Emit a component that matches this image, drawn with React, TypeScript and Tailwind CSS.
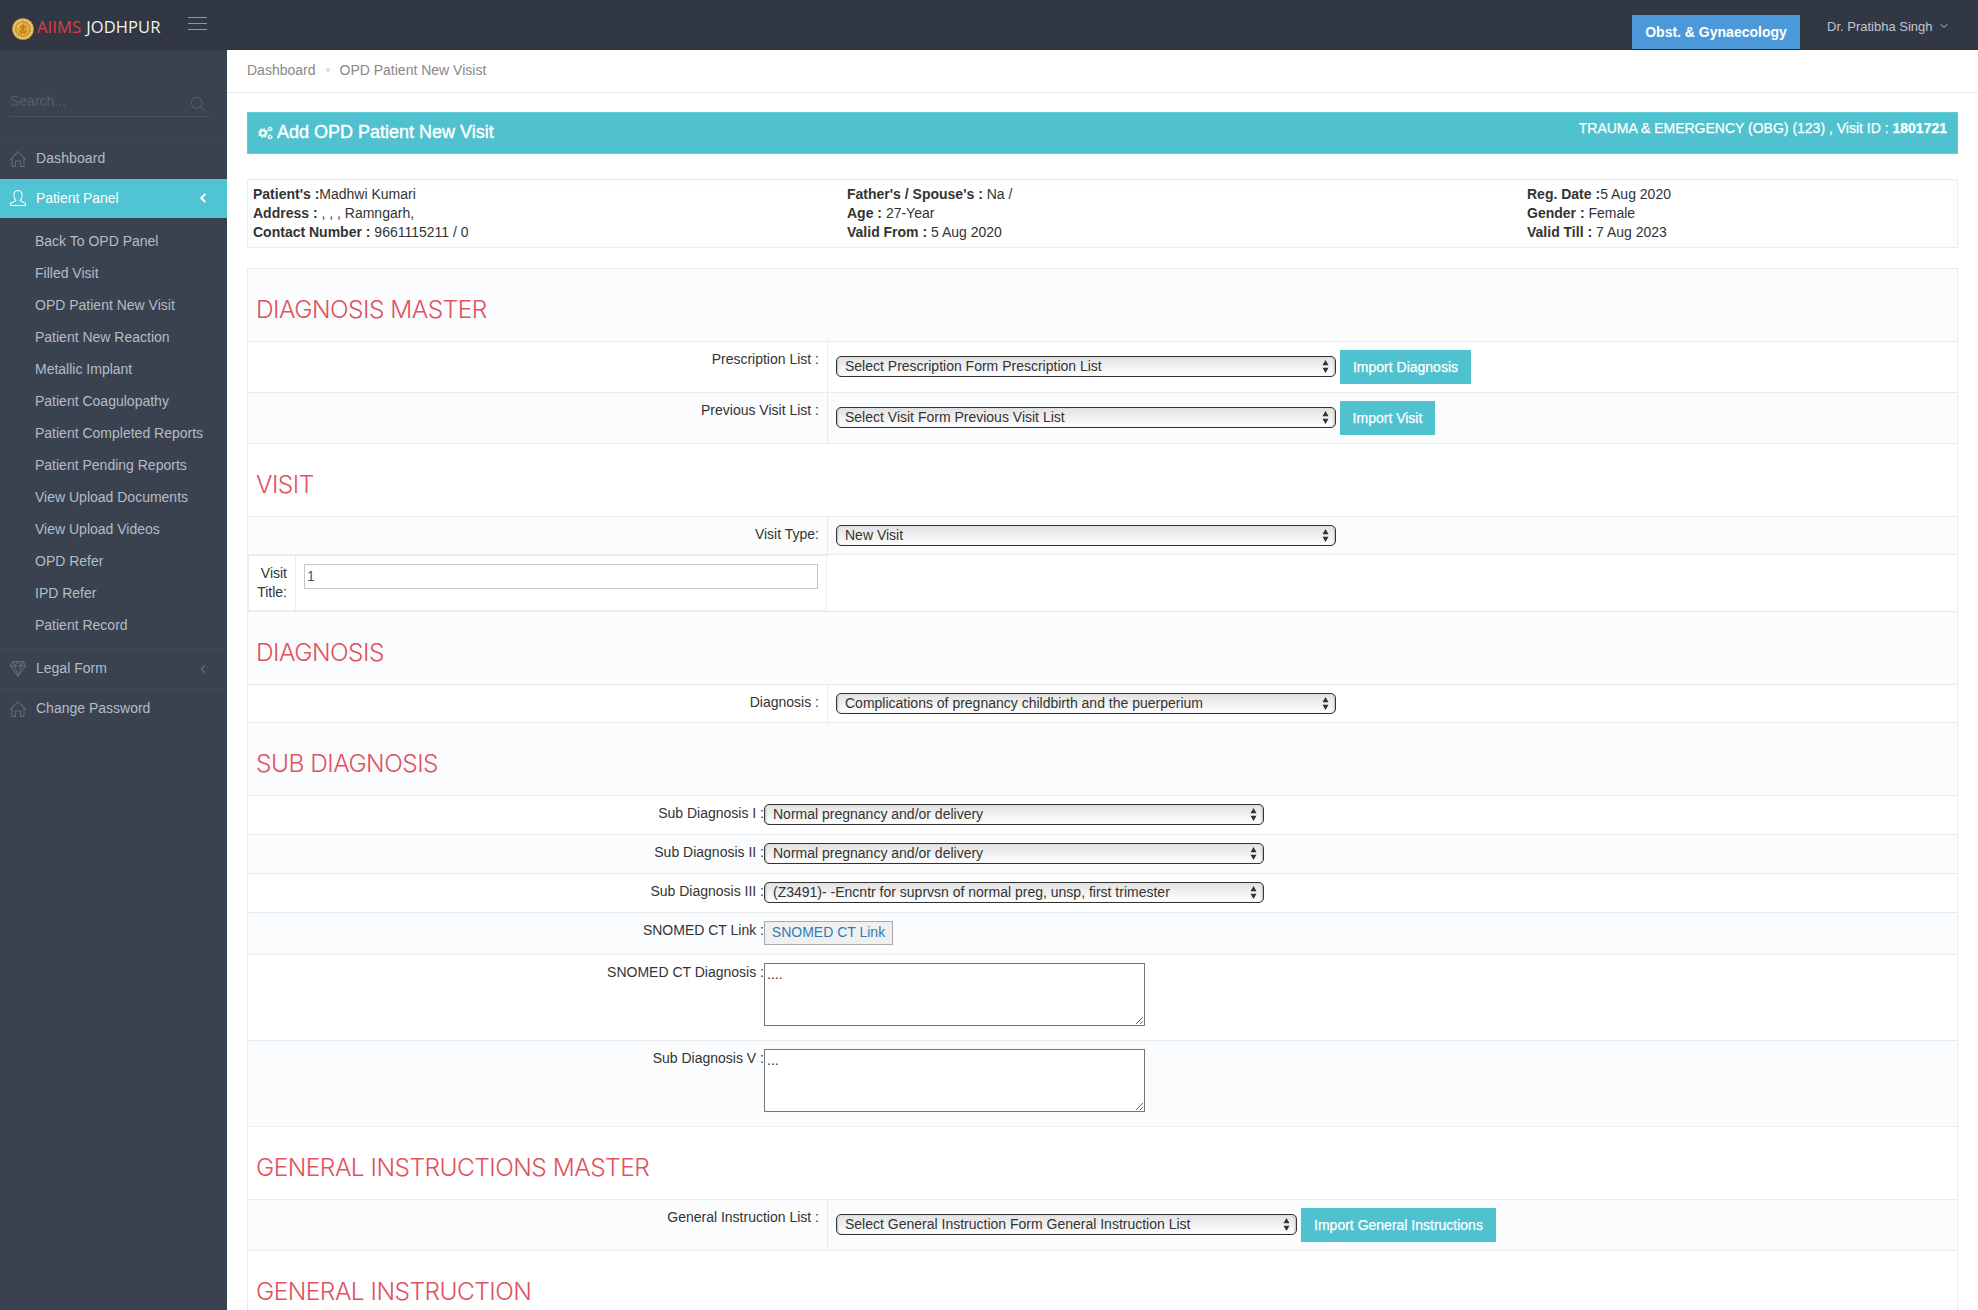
import React, { useState } from 'react';
import { SlHome, SlUser, SlDiamond, SlMagnifier } from 'react-icons/sl';
import { ChevronLeft, ChevronDown } from 'lucide-react';
import clsx from 'clsx';

const patientLinks = [
  'Back To OPD Panel',
  'Filled Visit',
  'OPD Patient New Visit',
  'Patient New Reaction',
  'Metallic Implant',
  'Patient Coagulopathy',
  'Patient Completed Reports',
  'Patient Pending Reports',
  'View Upload Documents',
  'View Upload Videos',
  'OPD Refer',
  'IPD Refer',
  'Patient Record'
];

const CogsIcon: React.FC<{ className?: string }> = ({ className }) => (
  <svg width="15" height="14" viewBox="0 0 15 14" fill="none" stroke="currentColor" className={className}>
    <circle cx="5" cy="7" r="2.8" strokeWidth="2" />
    <circle cx="5" cy="7" r="4.2" strokeWidth="1.4" strokeDasharray="1.65 1.65" />
    <circle cx="12" cy="3" r="1.5" strokeWidth="1.2" />
    <circle cx="12" cy="3" r="2.2" strokeWidth="0.8" strokeDasharray="1.15 1.15" />
    <circle cx="12" cy="11" r="1.5" strokeWidth="1.2" />
    <circle cx="12" cy="11" r="2.2" strokeWidth="0.8" strokeDasharray="1.15 1.15" />
  </svg>
);

const Header: React.FC = () => (
  <header className="flex h-[50px] shrink-0 bg-[#313843] border-b border-[#2b323d]">
    <div className="flex w-[227px] shrink-0">
      <svg width="22" height="22" viewBox="0 0 22 22" className="mt-[18px] ml-3 shrink-0">
        <circle cx="11" cy="11" r="10.8" fill="#dba544" />
        <circle cx="11" cy="11" r="9" fill="none" stroke="#f0dca6" strokeWidth="1.6" strokeDasharray="1.6 1.1" />
        <circle cx="11" cy="11" r="7.4" fill="#e6a930" stroke="#b98a3a" strokeWidth="0.8" />
        <path d="M9 16c.6-2 0-3-1.5-3.5M11 6v9M8 8c1 1 5 1 6 0M8.5 11h5M13 16c-.6-2 0-3 1.5-3.5" stroke="#a8752a" strokeWidth="1.1" fill="none" />
        <path d="M5.5 9c.8-2 2.3-3.2 4.2-3.4" stroke="#fbe596" strokeWidth="1" fill="none" />
      </svg>
      <div className="mt-[15px] ml-[3px] flex h-6 w-[126px] items-center font-['Open_Sans','Noto_Sans',sans-serif] text-[16.5px] leading-6 whitespace-nowrap">
        <span className="tracking-[0.15px] text-[#e23a42]">AIIMS</span>
        <span className="ml-[5px] tracking-[0.08px] text-[#f1f1f1]">JODHPUR</span>
      </div>
      <button className="mt-[17px] ml-[25px] flex h-[13px] w-[19px] flex-col justify-between">
        <span className="h-px w-full bg-[#8d99a8]" />
        <span className="h-px w-full bg-[#8d99a8]" />
        <span className="h-px w-full bg-[#8d99a8]" />
      </button>
    </div>
    <div className="flex flex-1 justify-end">
      <div className="mt-[15px] flex h-[34px] w-[168px] items-center justify-center bg-[#4b99d9] text-[14px] font-bold text-white">
        <span>Obst. &amp; Gynaecology</span>
      </div>
      <div className="ml-[27px] flex h-[52px] w-[151px] items-center text-[13px] text-[#c0c6d0]">
        <span className="w-[105px] whitespace-nowrap">Dr. Pratibha Singh</span>
        <ChevronDown size={12} className="ml-[6px]" />
      </div>
    </div>
  </header>
);

const Sidebar: React.FC = () => {
  const [search, setSearch] = useState('');

  return (
    <nav className="w-[227px] shrink-0 bg-[#39424e] text-[14px] text-[#b4bcc8]">
      <div className="h-[89px] px-[10px] pt-10">
        <div className="flex h-[27px] w-[199px] border-b border-[#47535f]">
          <input
            value={search}
            onChange={(e) => setSearch(e.target.value)}
            placeholder="Search..."
            className="h-[22px] w-[181px] bg-transparent text-[14px] outline-none placeholder:text-[#51606f]"
          />
          <SlMagnifier size={15} className="mt-[7px] text-[#51606f]" />
        </div>
      </div>

      <div className="flex h-10 items-center border-t border-[#3f4956] px-[10px] pb-[2px]">
        <SlHome size={16} className="text-[#606c7d]" />
        <span className="ml-[10px] tracking-[0.1px]">Dashboard</span>
      </div>
      <div className="flex h-[39px] items-center bg-[#50c4d2] px-[10px] pb-px text-white">
        <SlUser size={16} />
        <span className="ml-[10px] flex-1 tracking-[-0.05px]">Patient Panel</span>
        <ChevronLeft size={14} strokeWidth={3.5} className="mr-[7px]" />
      </div>

      <ul className="pt-[7px] pb-2">
        {patientLinks.map(link => (
          <li key={link} className="flex h-8 items-center pl-[35px] whitespace-nowrap">
            {link}
          </li>
        ))}
      </ul>

      <div className="flex h-10 items-center border-t border-[#3f4956] px-[10px] pb-[2px]">
        <SlDiamond size={16} className="text-[#606c7d]" />
        <span className="ml-[10px] flex-1">Legal Form</span>
        <ChevronLeft size={14} strokeWidth={2} className="mr-[7px] text-[#606c7d]" />
      </div>
      <div className="flex h-10 items-center border-t border-[#3f4956] px-[10px] pb-[2px]">
        <SlHome size={16} className="text-[#606c7d]" />
        <span className="ml-[10px]">Change Password</span>
      </div>
    </nav>
  );
};

interface RowProps {
  shaded?: boolean;
  className?: string;
  children: React.ReactNode;
}

const Row: React.FC<RowProps> = ({ shaded, className, children }) => (
  <div className={clsx('flex border-t border-[#e7ecf1]', shaded && 'bg-[#fbfcfd]', className)}>{children}</div>
);

const SectionTitle: React.FC<{ title: string; shaded?: boolean }> = ({ title, shaded }) => (
  <Row shaded={shaded} className="h-[73px]">
    <h3 className="pt-[26px] pl-2 font-['Inter','Liberation_Sans',sans-serif] text-[24.5px] leading-7 font-light tracking-[-0.53px] text-[#e0525f]">
      {title}
    </h3>
  </Row>
);

const Select: React.FC<{ value: string; className?: string }> = ({ value, className }) => (
  <div className={clsx('relative h-[21px]', className)}>
    <select className="block h-[21px] w-full appearance-none rounded-[5px] border border-[#333] bg-linear-to-b from-[#e2e2e2] to-white pr-5 pl-2 text-[14px] leading-[19px] text-[#333] shadow-[inset_2px_0_2px_-1px_#bbb,inset_-2px_0_2px_-1px_#bbb]">
      <option>{value}</option>
    </select>
    <svg width="7" height="13" viewBox="0 0 7 13" className="pointer-events-none absolute top-1 right-[7px]" fill="#333">
      <path d="M3.5 0 6.5 5.2h-6zM3.5 13l3-5.2h-6z" />
    </svg>
  </div>
);

const ImportButton: React.FC<{ label: string; className: string }> = ({ label, className }) => (
  <button
    className={clsx(
      'h-[34px] bg-[#50c1cf] text-[14px] whitespace-nowrap text-white [-webkit-text-stroke:0.25px_#fff]',
      className
    )}
  >
    {label}
  </button>
);

// label cell + divider, used by the rows with two bordered columns
const FieldRow: React.FC<RowProps & { label: string }> = ({ label, shaded, className, children }) => (
  <Row shaded={shaded} className={className}>
    <div className="w-[580px] border-r border-[#e7ecf1] pt-2 pr-2 text-right">{label}</div>
    <div className="flex gap-1 pt-2 pl-2">{children}</div>
  </Row>
);

const SubRow: React.FC<RowProps & { label: string }> = ({ label, shaded, className, children }) => (
  <Row shaded={shaded} className={className}>
    <div className="w-[516px] pt-2 text-right">{label}</div>
    <div className="pt-2">{children}</div>
  </Row>
);

const notesClass =
  'block h-[63px] w-[381px] resize border border-[#767676] bg-white px-[2px] pt-[2px] text-[14px] leading-[17px] text-[#333]';

const Info: React.FC<{ label: string; value: string }> = ({ label, value }) => (
  <div className="whitespace-pre">
    <b>{label}</b>
    {value}
  </div>
);

export default function App() {
  return (
    <div className="flex h-[1310px] w-[1978px] flex-col overflow-hidden bg-white font-['Liberation_Sans',Arial,sans-serif] text-[14px] leading-[19px] text-[#333]">
      <Header />
      <div className="flex min-h-0 flex-1">
        <Sidebar />
        <main className="min-w-0 flex-1 overflow-hidden">
          <div className="flex h-[43px] items-center border-b border-[#e7ecf1] pb-[2px] pl-5 text-[#888]">
            <span>Dashboard</span>
            <span className="mx-[10px] h-1 w-1 rounded-full bg-[#ddd]" />
            <span>OPD Patient New Visist</span>
          </div>

          <div className="mx-5 mt-[19px] flex h-[42px] w-[1711px] justify-between border border-[#5fcbd7] bg-[#50c1cf] px-[10px] text-white [-webkit-text-stroke:0.25px_#fff]">
            <div className="flex h-[38px] items-center text-[18px]">
              <CogsIcon className="mt-[2px]" />
              <span className="ml-1 [-webkit-text-stroke:0.4px_#fff]">Add OPD Patient New Visit</span>
            </div>
            <div className="pt-[6px] whitespace-nowrap">
              TRAUMA &amp; EMERGENCY (OBG) (123) , Visit ID : <b>1801721</b>
            </div>
          </div>

          <div className="mx-5 mt-[25px] h-[69px] w-[1711px] border border-[#e7ecf1] bg-[#fbfcfd] p-[5px]">
            <div className="flex h-[57px] bg-white">
              <div className="w-[594px]">
                <Info label="Patient's :" value="Madhwi Kumari" />
                <Info label="Address :" value=" , , , Ramngarh," />
                <Info label="Contact Number :" value=" 9661115211 / 0" />
              </div>
              <div className="w-[680px]">
                <Info label="Father's / Spouse's :" value=" Na /" />
                <Info label="Age :" value=" 27-Year" />
                <Info label="Valid From :" value=" 5 Aug 2020" />
              </div>
              <div>
                <Info label="Reg. Date :" value="5 Aug 2020" />
                <Info label="Gender :" value=" Female" />
                <Info label="Valid Till :" value=" 7 Aug 2023" />
              </div>
            </div>
          </div>

          <div className="mx-5 mt-5 w-[1711px] border-x border-[#e7ecf1]">
            <SectionTitle title="DIAGNOSIS MASTER" shaded />
            <FieldRow label="Prescription List :" className="h-[51px]">
              <Select value="Select Prescription Form Prescription List" className="mt-[6px] w-[500px]" />
              <ImportButton label="Import Diagnosis" className="w-[131px]" />
            </FieldRow>
            <FieldRow label="Previous Visit List :" shaded className="h-[51px]">
              <Select value="Select Visit Form Previous Visit List" className="mt-[6px] w-[500px]" />
              <ImportButton label="Import Visit" className="w-[95px]" />
            </FieldRow>

            <SectionTitle title="VISIT" />
            <FieldRow label="Visit Type:" shaded className="h-[38px]">
              <Select value="New Visit" className="w-[500px]" />
            </FieldRow>
            <Row className="h-[57px]">
              <div className="flex h-14 w-[579px] border border-[#e7ecf1]">
                <div className="w-[47px] border-r border-[#e7ecf1] pt-2 pr-2 text-right">Visit Title:</div>
                <div className="flex-1 px-2 pt-2">
                  <input
                    defaultValue="1"
                    className="block h-[25px] w-full border border-[#c5c5c5] bg-white px-[2px] pb-px text-[14px] text-[#555]"
                  />
                </div>
              </div>
            </Row>

            <SectionTitle title="DIAGNOSIS" shaded />
            <FieldRow label="Diagnosis :" className="h-[38px]">
              <Select value="Complications of pregnancy childbirth and the puerperium" className="w-[500px]" />
            </FieldRow>

            <SectionTitle title="SUB DIAGNOSIS" shaded />
            <SubRow label="Sub Diagnosis I :" className="h-[39px]">
              <Select value="Normal pregnancy and/or delivery" className="w-[500px]" />
            </SubRow>
            <SubRow label="Sub Diagnosis II :" shaded className="h-[39px]">
              <Select value="Normal pregnancy and/or delivery" className="w-[500px]" />
            </SubRow>
            <SubRow label="Sub Diagnosis III :" className="h-[39px]">
              <Select value="(Z3491)- -Encntr for suprvsn of normal preg, unsp, first trimester" className="w-[500px]" />
            </SubRow>
            <SubRow label="SNOMED CT Link :" shaded className="h-[42px]">
              <button className="block h-6 w-[129px] border border-[#a9a9a9] bg-[#f0f0f0] pb-[2px] text-[14px] leading-5 whitespace-nowrap text-[#337ab7]">
                SNOMED CT Link
              </button>
            </SubRow>
            <SubRow label="SNOMED CT Diagnosis :" className="h-[86px]">
              <textarea defaultValue="...." className={notesClass} />
            </SubRow>
            <SubRow label="Sub Diagnosis V :" shaded className="h-[86px]">
              <textarea defaultValue="..." className={notesClass} />
            </SubRow>

            <SectionTitle title="GENERAL INSTRUCTIONS MASTER" />
            <FieldRow label="General Instruction List :" shaded className="h-[51px]">
              <Select value="Select General Instruction Form General Instruction List" className="mt-[6px] w-[461px]" />
              <ImportButton label="Import General Instructions" className="w-[195px]" />
            </FieldRow>
            <SectionTitle title="GENERAL INSTRUCTION" />
          </div>
        </main>
      </div>
    </div>
  );
}
